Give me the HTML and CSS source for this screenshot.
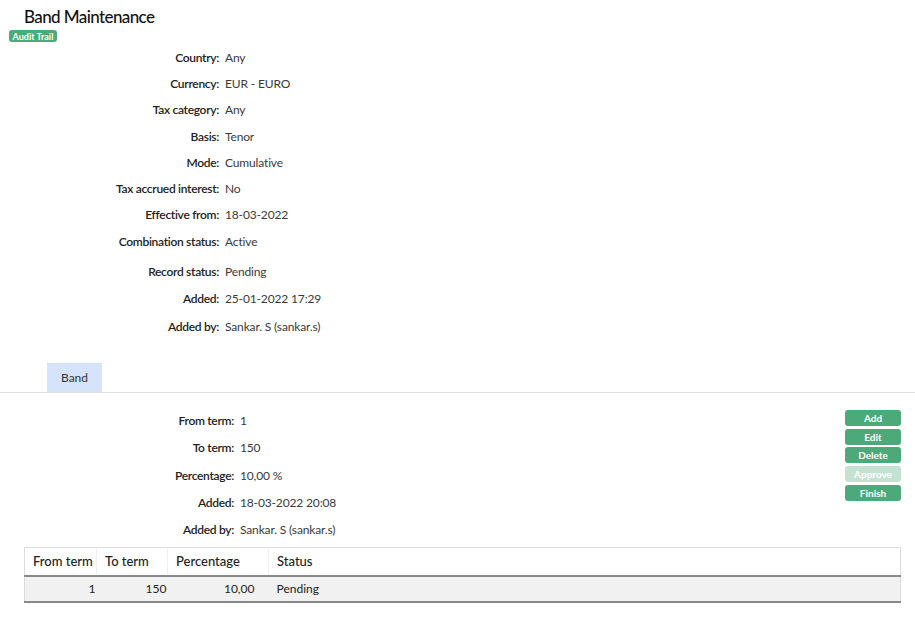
FILE: index.html
```html
<!DOCTYPE html>
<html>
<head>
<meta charset="utf-8">
<title>Band Maintenance</title>
<link rel="stylesheet" href="styles.css">
</head>
<body>
<header class="page-head">
  <h1 class="title">Band Maintenance</h1>
  <span class="badge">Audit Trail</span>
</header>

<section class="details">
  <div class="group">
    <div class="row"><span class="label">Country:</span><span class="value">Any</span></div>
    <div class="row"><span class="label">Currency:</span><span class="value">EUR - EURO</span></div>
    <div class="row"><span class="label">Tax category:</span><span class="value">Any</span></div>
    <div class="row"><span class="label">Basis:</span><span class="value">Tenor</span></div>
    <div class="row"><span class="label">Mode:</span><span class="value">Cumulative</span></div>
    <div class="row"><span class="label">Tax accrued interest:</span><span class="value">No</span></div>
    <div class="row"><span class="label">Effective from:</span><span class="value">18-03-2022</span></div>
    <div class="row"><span class="label">Combination status:</span><span class="value">Active</span></div>
  </div>
  <div class="group group-audit">
    <div class="row"><span class="label">Record status:</span><span class="value">Pending</span></div>
    <div class="row"><span class="label">Added:</span><span class="value">25-01-2022 17:29</span></div>
    <div class="row"><span class="label">Added by:</span><span class="value">Sankar. S (sankar.s)</span></div>
  </div>
</section>

<nav class="tabs">
  <span class="tab active">Band</span>
</nav>

<section class="band">
  <div class="band-form">
    <div class="row"><span class="label">From term:</span><span class="value">1</span></div>
    <div class="row"><span class="label">To term:</span><span class="value">150</span></div>
    <div class="row"><span class="label">Percentage:</span><span class="value">10,00 %</span></div>
    <div class="row"><span class="label">Added:</span><span class="value">18-03-2022 20:08</span></div>
    <div class="row"><span class="label">Added by:</span><span class="value">Sankar. S (sankar.s)</span></div>
  </div>
  <div class="actions">
    <button class="btn">Add</button>
    <button class="btn">Edit</button>
    <button class="btn">Delete</button>
    <button class="btn disabled" disabled>Approve</button>
    <button class="btn">Finish</button>
  </div>
</section>

<table class="grid">
  <thead>
    <tr>
      <th class="c1">From term</th>
      <th class="c2">To term</th>
      <th class="c3">Percentage</th>
      <th class="c4">Status</th>
    </tr>
  </thead>
  <tbody>
    <tr>
      <td class="c1 num">1</td>
      <td class="c2 num">150</td>
      <td class="c3 num pct">10,00</td>
      <td class="c4">Pending</td>
    </tr>
  </tbody>
</table>
</body>
</html>
```

FILE: styles.css
```css
* { box-sizing: border-box; }

body {
  margin: 0;
  font-family: Lato, "Liberation Sans", sans-serif;
  font-size: 12px;
  color: #333;
  background: #fff;
}

.page-head {
  display: flex;
  flex-direction: column;
  align-items: flex-start;
}

.title {
  margin: 0 0 0 24px;
  padding-top: 6px;
  font-size: 17px;
  line-height: 22px;
  font-weight: 500;
  letter-spacing: -0.6px;
  color: #111;
}

.badge {
  margin: 2px 0 0 9px;
  height: 12px;
  width: 48px;
  display: flex;
  align-items: center;
  justify-content: center;
  background: #4caa7a;
  color: #fff;
  font-size: 9px;
  font-weight: 700;
  border-radius: 3px;
}

.details {
  margin-top: 2px;
}

.row {
  display: flex;
  align-items: center;
  height: 26.3px;
}

.label {
  width: 219px;
  text-align: right;
  font-weight: 600;
  letter-spacing: -0.3px;
  color: #222;
  flex: none;
}

.value {
  margin-left: 6px;
  letter-spacing: -0.15px;
  color: #3a3a3a;
}

.group-audit {
  margin-top: 3px;
}

.group-audit .row {
  height: 27.5px;
}

.tabs {
  margin-top: 23px;
  height: 30px;
  border-bottom: 1px solid #dedede;
  display: flex;
  padding-left: 47px;
}

.tab {
  width: 55px;
  height: 29px;
  display: flex;
  align-items: center;
  justify-content: center;
  color: #333;
  font-size: 12px;
}

.tab.active {
  background: #d6e4fb;
}

.band {
  display: flex;
  margin-top: 14px;
  padding-right: 14px;
}

.band-form {
  flex: 1;
}

.band-form .row {
  height: 27.25px;
}

.band-form .label {
  width: 234px;
}

.actions {
  display: flex;
  flex-direction: column;
  gap: 2.75px;
  margin-top: 3px;
}

.btn {
  width: 56px;
  height: 16px;
  padding: 0;
  border: none;
  border-radius: 3px;
  background: #4caa7a;
  color: #fff;
  font-family: Lato, "Liberation Sans", sans-serif;
  font-size: 10px;
  font-weight: 700;
}

.btn.disabled {
  background: #c3e2d2;
}

.grid {
  margin: 4px 14px 0 24px;
  width: 877px;
  border-collapse: collapse;
  border: 1px solid #dcdcdc;
  border-bottom: none;
}

.grid th {
  height: 28px;
  text-align: left;
  font-size: 13px;
  font-weight: 500;
  color: #222;
  padding: 0 0 0 8px;
  border-right: 1px solid #eeeeee;
  border-bottom: 2px solid #888;
}

.grid th.c4 { border-right: none; }

.grid .c1 { width: 72px; }
.grid .c2 { width: 71px; }
.grid .c3 { width: 101px; }

.grid td {
  height: 26px;
  background: #f1f1f1;
  font-size: 12px;
  color: #222;
  padding: 0 0 0 8px;
  border-bottom: 2px solid #888;
}

.grid td.num {
  text-align: right;
  padding: 0 1px 0 0;
}

.grid td.pct {
  padding-right: 14px;
}
```
